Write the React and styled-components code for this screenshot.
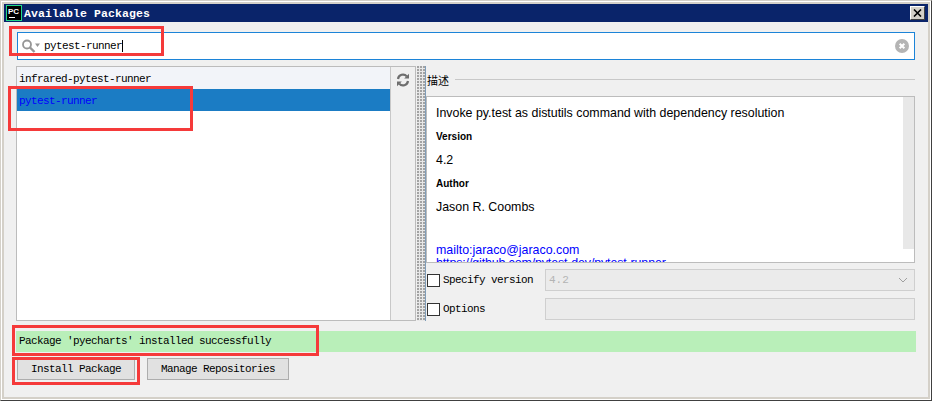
import React from 'react';
import styled, { createGlobalStyle } from 'styled-components';

const Global = createGlobalStyle`
  html, body { margin: 0; padding: 0; background: #f0f0f0; }
`;

const MONO = `"Liberation Mono", monospace`;

const Window = styled.div`
  position: relative;
  width: 932px;
  height: 401px;
  box-sizing: border-box;
  border: 1px solid;
  border-color: #d4d0c8 #404040 #404040 #d4d0c8;
  background: #f0f0f0;
  display: flex;
  flex-direction: column;
  overflow: hidden;
  box-shadow: inset 0 0 0 1px #fff, inset 0 0 0 3px #d4d0c8;
`;

const TitleBar = styled.div`
  height: 18px;
  margin: 3px 3px 0;
  padding: 0 3px 0 2px;
  background: #0a246a;
  display: flex;
  align-items: center;
  flex: none;
`;

const Logo = styled.svg`
  width: 16px;
  height: 16px;
  flex: none;
`;

const TitleText = styled.div`
  margin-left: 2px;
  color: #fff;
  font: bold 11.5px ${MONO};
  letter-spacing: 0.1px;
  flex: 1;
`;

const CloseButton = styled.div`
  width: 15px;
  height: 14px;
  box-sizing: border-box;
  background: #d4d0c8;
  border: 1px solid;
  border-color: #fff #404040 #404040 #fff;
  display: flex;
  align-items: center;
  justify-content: center;
`;

const Body = styled.div`
  flex: 1;
  display: flex;
  flex-direction: column;
  padding: 10px 16px 0 15px;
`;

const SearchBox = styled.div`
  height: 28px;
  margin-left: 1px;
  box-sizing: border-box;
  border: 1px solid #1c84d8;
  background: #fff;
  display: flex;
  align-items: center;
  padding: 0 5px 0 4px;
  flex: none;
`;

const SearchInput = styled.div`
  flex: 1;
  font: 11px ${MONO};
  letter-spacing: -0.6px;
  color: #000;
  display: flex;
  align-items: center;
`;

const Caret = styled.span`
  display: inline-block;
  width: 1px;
  height: 12px;
  background: #000;
`;

const Main = styled.div`
  height: 255px;
  margin-top: 6px;
  display: flex;
  flex: none;
`;

const ListPanel = styled.div`
  width: 400px;
  box-sizing: border-box;
  border: 1px solid #bcbcbc;
  display: flex;
  flex: none;
`;

const List = styled.div`
  flex: 1;
  background: #fff;
  border-right: 1px solid #c8c8c8;
`;

const Row = styled.div`
  height: 22px;
  padding: 1px 0 0 2px;
  box-sizing: border-box;
  font: 11px/22px ${MONO};
  letter-spacing: -0.6px;
  color: ${p => (p.$selected ? '#0000ff' : '#000')};
  background: ${p => (p.$selected ? '#1b7cc4' : '#f2f4f9')};
`;

const SideBar = styled.div`
  width: 24px;
  flex: none;
  display: flex;
  justify-content: center;
  padding-top: 6px;
`;

const Splitter = styled.div`
  width: 9px;
  margin-left: 1px;
  flex: none;
  box-sizing: border-box;
  border-right: 1px solid #7f9db9;
  background-color: #e8e8e8;
  background-image: radial-gradient(circle at 1px 1px, #8a8a8a 0.6px, transparent 1px);
  background-size: 3px 3px;
`;

const RightPane = styled.div`
  flex: 1;
  display: flex;
  flex-direction: column;
  min-width: 0;
`;

const SectionHeader = styled.div`
  height: 27px;
  margin-bottom: 3px;
  display: flex;
  align-items: center;
  gap: 6px;
  padding-left: 1px;
  flex: none;
  font: 11px "Noto Sans CJK SC", sans-serif;
  color: #000;
  &::after {
    content: '';
    flex: 1;
    height: 1px;
    background: #c8c8c8;
  }
`;

const DescBox = styled.div`
  position: relative;
  height: 167px;
  box-sizing: border-box;
  border: 1px solid #bcbcbc;
  background: #fff;
  overflow: hidden;
  padding: 0 0 0 9px;
  flex: none;
  font-family: "Liberation Sans", Arial, sans-serif;
  color: #000;
`;

const ScrollTrack = styled.div`
  position: absolute;
  top: 0;
  right: 0;
  width: 11px;
  height: 152px;
  background: #e8e8e8;
`;

const DescLine = styled.div`
  height: ${p => p.$h}px;
  line-height: ${p => p.$h}px;
  white-space: nowrap;
  font-size: ${p => (p.$label ? '10px' : '12.4px')};
  font-weight: ${p => (p.$label ? 700 : 400)};
  color: ${p => (p.$link ? '#0000ff' : '#000')};
`;

const UrlLine = styled(DescLine)`
  letter-spacing: -0.12px;
`;

const OptionRow = styled.div`
  height: 22px;
  margin-top: ${p => p.$top}px;
  display: flex;
  align-items: center;
  flex: none;
`;

const CheckBox = styled.div`
  width: 13px;
  height: 13px;
  margin-left: 1px;
  box-sizing: border-box;
  border: 1px solid #333;
  background: #fff;
  flex: none;
`;

const OptionLabel = styled.div`
  width: 102px;
  margin-left: 3px;
  font: 11px ${MONO};
  letter-spacing: -0.6px;
  color: #000;
  flex: none;
`;

const Field = styled.div`
  flex: 1;
  height: 22px;
  box-sizing: border-box;
  border: 1px solid #cfcfcf;
  background: #ebebeb;
  display: flex;
  align-items: center;
  justify-content: space-between;
  padding: 0 6px 0 3px;
  font: 11px ${MONO};
  color: #b4b4b4;
`;

const StatusBar = styled.div`
  height: 21px;
  margin: 10px -1px 0 0;
  padding-left: 3px;
  background: #b9efb9;
  font: 11px/21px ${MONO};
  letter-spacing: -0.6px;
  color: #000;
  flex: none;
`;

const ButtonRow = styled.div`
  display: flex;
  gap: 12px;
  margin: 6px 0 0 1px;
`;

const Button = styled.div`
  width: ${p => p.$w}px;
  height: 22px;
  box-sizing: border-box;
  border: 1px solid #adadad;
  background: #e1e1e1;
  text-align: center;
  font: 11px/20px ${MONO};
  letter-spacing: -0.6px;
  color: #000;
`;

// red annotation boxes drawn over the screenshot
const Mark = styled.div`
  position: absolute;
  left: ${p => p.$x}px;
  top: ${p => p.$y}px;
  width: ${p => p.$w}px;
  height: ${p => p.$h}px;
  box-sizing: border-box;
  border: 3px solid #f53a3a;
  pointer-events: none;
`;

const PcLogo = () => (
  <Logo viewBox="0 0 16 16">
    <rect x="0.5" y="0.5" width="15" height="15" fill="#000" stroke="#21d789" />
    <text x="2" y="9" fill="#fff" fontSize="8" fontWeight="700" fontFamily="Liberation Sans">PC</text>
    <rect x="3" y="12" width="6" height="1" fill="#fff" />
  </Logo>
);

const SearchIcon = () => (
  <svg width="22" height="16" viewBox="0 0 22 16" style={{ flex: 'none' }}>
    <circle cx="5" cy="6.5" r="4" fill="none" stroke="#969696" strokeWidth="1.8" />
    <path d="M8 9.5 L12.5 14" stroke="#969696" strokeWidth="2.4" />
    <path d="M13 5.5 H18 L15.5 9 Z" fill="#969696" />
  </svg>
);

const ClearIcon = () => (
  <svg width="14" height="14" viewBox="0 0 15 15" style={{ flex: 'none' }}>
    <circle cx="7.5" cy="7.5" r="7.5" fill="#b4b4b4" />
    <path d="M5 5 L10 10 M10 5 L5 10" stroke="#fff" strokeWidth="2.2" />
  </svg>
);

const RefreshIcon = () => (
  <svg width="14" height="14" viewBox="0 0 14 14">
    <path d="M2 6 A5 5 0 0 1 10.8 3.4" fill="none" stroke="#6e6e6e" strokeWidth="2.2" />
    <path d="M8.2 5.6 H13 V0.8 Z" fill="#6e6e6e" />
    <path d="M12 8 A5 5 0 0 1 3.2 10.6" fill="none" stroke="#6e6e6e" strokeWidth="2.2" />
    <path d="M5.8 8.4 H1 V13.2 Z" fill="#6e6e6e" />
  </svg>
);

const Chevron = () => (
  <svg width="10" height="6" viewBox="0 0 10 6">
    <path d="M1 1 L5 5 L9 1" fill="none" stroke="#a0a0a0" strokeWidth="1" />
  </svg>
);

const CloseGlyph = () => (
  <svg width="9" height="8" viewBox="0 0 9 8">
    <path d="M1 0.5 L8 7.5 M8 0.5 L1 7.5" stroke="#000" strokeWidth="1.6" />
  </svg>
);

export default function App() {
  return (
    <Window>
      <Global />
      <TitleBar>
        <PcLogo />
        <TitleText>Available Packages</TitleText>
        <CloseButton><CloseGlyph /></CloseButton>
      </TitleBar>
      <Body>
        <SearchBox>
          <SearchIcon />
          <SearchInput>pytest-runner<Caret /></SearchInput>
          <ClearIcon />
        </SearchBox>
        <Main>
          <ListPanel>
            <List>
              <Row>infrared-pytest-runner</Row>
              <Row $selected>pytest-runner</Row>
            </List>
            <SideBar><RefreshIcon /></SideBar>
          </ListPanel>
          <Splitter />
          <RightPane>
            <SectionHeader>描述</SectionHeader>
            <DescBox>
              <ScrollTrack />
              <DescLine $h={32}>Invoke py.test as distutils command with dependency resolution</DescLine>
              <DescLine $label $h={16}>Version</DescLine>
              <DescLine $h={30}>4.2</DescLine>
              <DescLine $label $h={17}>Author</DescLine>
              <DescLine $h={31}>Jason R. Coombs</DescLine>
              <DescLine $h={21} />
              <DescLine $link $h={13}>mailto:jaraco@jaraco.com</DescLine>
              <UrlLine $link $h={13}>https://github.com/pytest-dev/pytest-runner</UrlLine>
            </DescBox>
            <OptionRow $top={6}>
              <CheckBox />
              <OptionLabel>Specify version</OptionLabel>
              <Field>4.2<Chevron /></Field>
            </OptionRow>
            <OptionRow $top={7}>
              <CheckBox />
              <OptionLabel>Options</OptionLabel>
              <Field />
            </OptionRow>
          </RightPane>
        </Main>
        <StatusBar>Package 'pyecharts' installed successfully</StatusBar>
        <ButtonRow>
          <Button $w={118}>Install Package</Button>
          <Button $w={142}>Manage Repositories</Button>
        </ButtonRow>
      </Body>
      <Mark $x={8} $y={25} $w={155} $h={30} />
      <Mark $x={7} $y={85} $w={185} $h={45} />
      <Mark $x={11} $y={324} $w={307} $h={31} />
      <Mark $x={11} $y={356} $w={128} $h={28} />
    </Window>
  );
}
